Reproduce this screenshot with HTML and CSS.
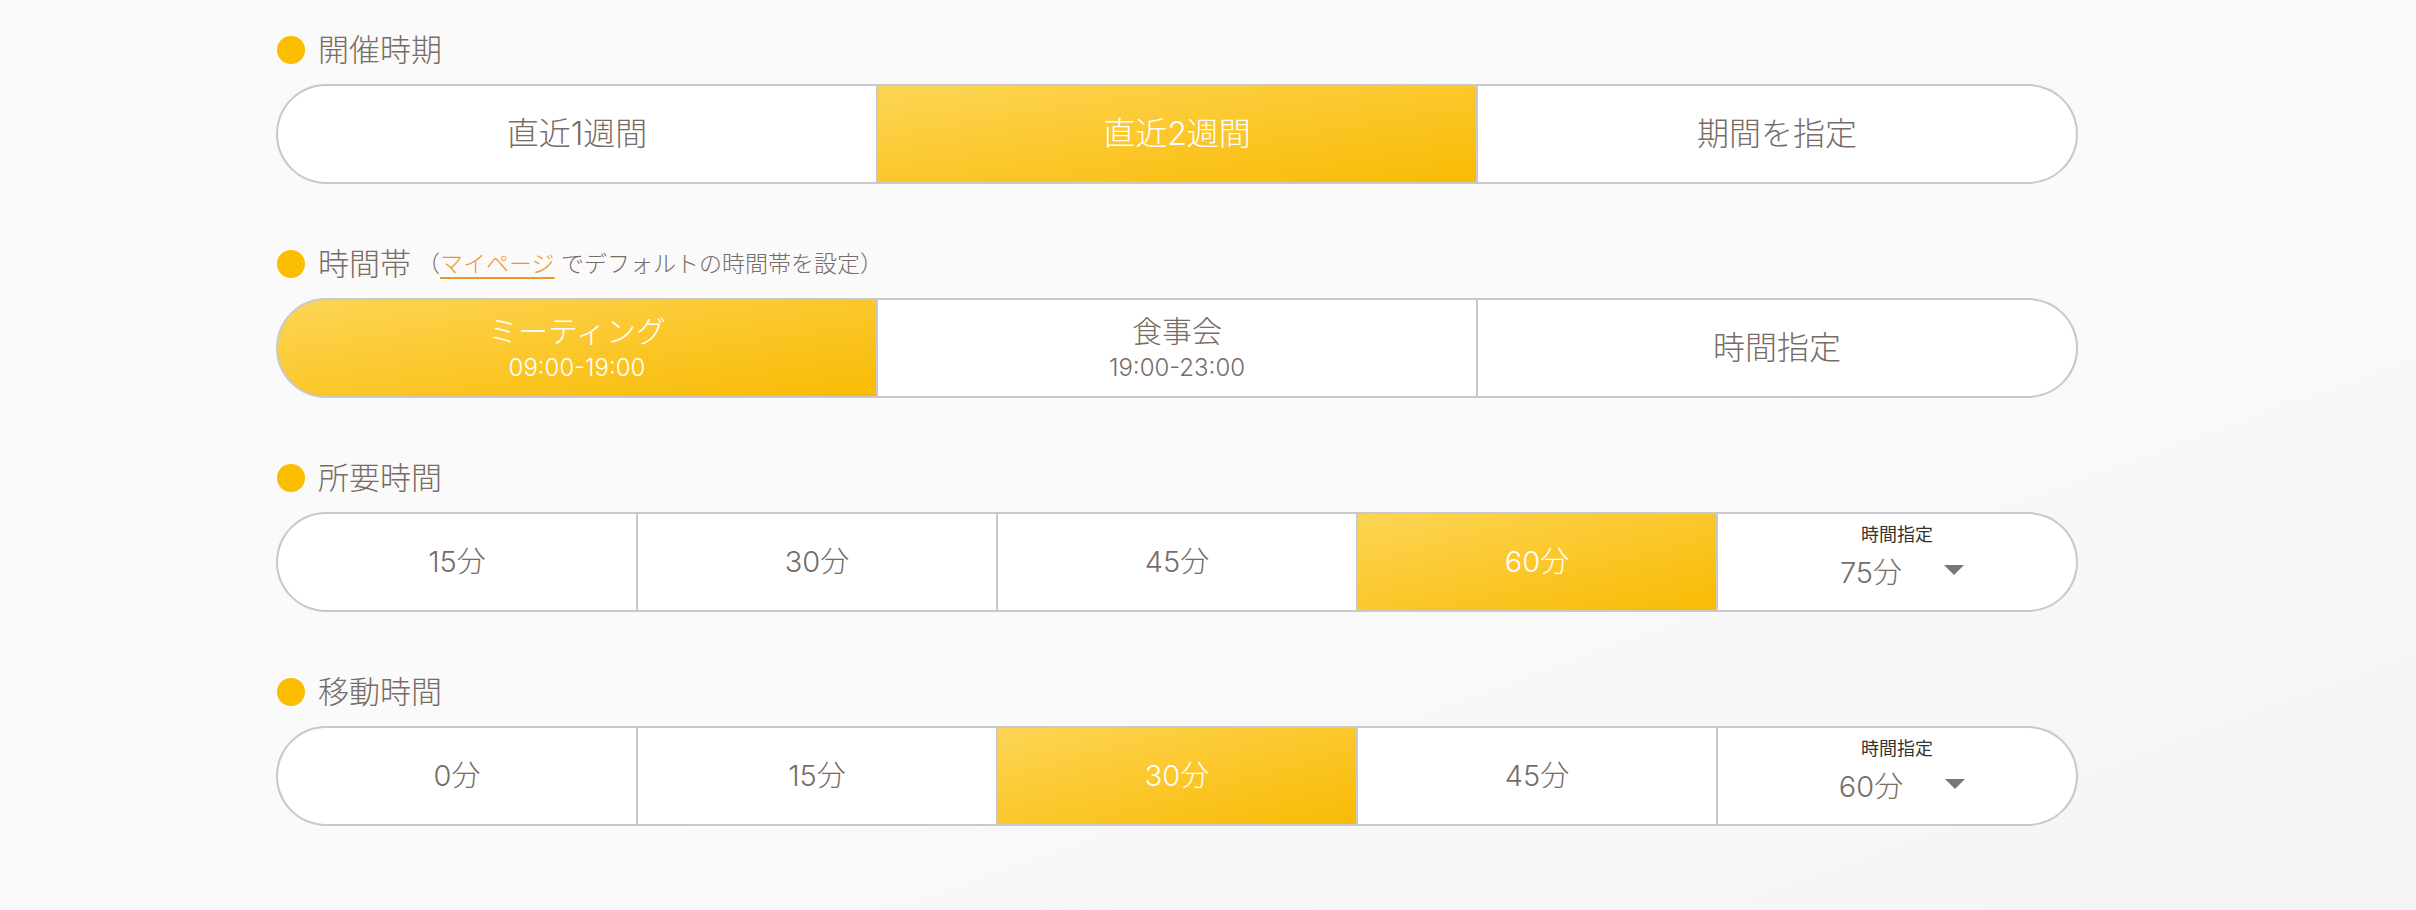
FILE: index.html
```html
<!DOCTYPE html>
<html lang="ja">
<head>
  <meta charset="UTF-8" />
  <meta name="viewport" content="width=device-width, initial-scale=1.0"/>
  <title>検索条件</title>
  <link rel="stylesheet" href="styles.css">
</head>
<body>
  <div class="container">
    <div class="section">
      <h2 class="title"><span class="dot"></span>開催時期</h2>
      <div class="segments cols-3">
        <div class="seg">直近1週間</div>
        <div class="seg active">直近2週間</div>
        <div class="seg">期間を指定</div>
      </div>
    </div>

    <div class="section">
      <h2 class="title"><span class="dot"></span>時間帯<span class="note">（<a href="#">マイページ</a> でデフォルトの時間帯を設定）</span></h2>
      <div class="segments cols-3">
        <div class="seg active">
          <div class="label">ミーティング</div>
          <div class="time">09:00-19:00</div>
        </div>
        <div class="seg">
          <div class="label">食事会</div>
          <div class="time">19:00-23:00</div>
        </div>
        <div class="seg">時間指定</div>
      </div>
    </div>

    <div class="section">
      <h2 class="title"><span class="dot"></span>所要時間</h2>
      <div class="segments cols-5">
        <div class="seg small">15分</div>
        <div class="seg small">30分</div>
        <div class="seg small">45分</div>
        <div class="seg small active">60分</div>
        <div class="seg small custom">
          <div class="custom-label">時間指定</div>
          <div class="custom-value">75分<span class="arrow"></span></div>
        </div>
      </div>
    </div>

    <div class="section">
      <h2 class="title"><span class="dot"></span>移動時間</h2>
      <div class="segments cols-5">
        <div class="seg small">0分</div>
        <div class="seg small">15分</div>
        <div class="seg small active">30分</div>
        <div class="seg small">45分</div>
        <div class="seg small custom">
          <div class="custom-label">時間指定</div>
          <div class="custom-value">60分<span class="arrow"></span></div>
        </div>
      </div>
    </div>
  </div>
</body>
</html>
```

FILE: styles.css
```css
html, body {
  height: 100%;
}

body {
  font-family: Inter, "Noto Sans CJK JP", "Noto Sans", sans-serif;
  font-weight: 300;
  background: linear-gradient(160deg, #fafafa 55%, #f4f4f4);
  color: #786c66;
  margin: 0;
  padding: 0;
}

.container {
  width: 1802px;
  padding: 30px 0 0 276px;
}

.section {
  margin-bottom: 60px;
}

.title {
  display: flex;
  align-items: center;
  height: 40px;
  margin: 0 0 14px;
  font-size: 31px;
  font-weight: 300;
  line-height: 40px;
}

.dot {
  width: 28px;
  height: 28px;
  border-radius: 50%;
  background-color: #fbbd00;
  margin: 0 13px 0 1px;
}

.note {
  font-size: 23px;
  margin-left: 6px;
}

.note a {
  color: #f0962a;
  text-decoration: underline;
  text-underline-offset: 5px;
}

.segments {
  display: grid;
  gap: 2px;
  height: 100px;
  box-sizing: border-box;
  border: 2px solid #c9c9c9;
  border-radius: 50px;
  background-color: #c9c9c9;
  overflow: hidden;
}

.cols-3 {
  grid-template-columns: repeat(3, 1fr);
}

.cols-5 {
  grid-template-columns: repeat(5, 1fr);
}

.seg {
  display: flex;
  flex-direction: column;
  justify-content: center;
  align-items: center;
  background-color: white;
  font-size: 32px;
  line-height: 38px;
}

.seg.small {
  font-size: 29px;
}

.seg.active {
  background: linear-gradient(to bottom right, #fdd555, #fbc72b 50%, #f8bb04);
  color: white;
}

.label {
  font-size: 30px;
  line-height: 37px;
  margin-top: 3px;
}

.time {
  font-size: 24px;
  line-height: 36px;
}

.custom {
  padding-bottom: 13px;
  box-sizing: border-box;
}

.custom-label {
  font-size: 18px;
  line-height: 22px;
  font-weight: normal;
  color: #333;
}

.custom-value {
  display: flex;
  align-items: center;
  gap: 42px;
  line-height: 30px;
  margin: 12px 0 0 10px;
}

.arrow {
  width: 0;
  height: 0;
  border-left: 10px solid transparent;
  border-right: 10px solid transparent;
  border-top: 10px solid #777;
  margin-bottom: 6px;
}
```
